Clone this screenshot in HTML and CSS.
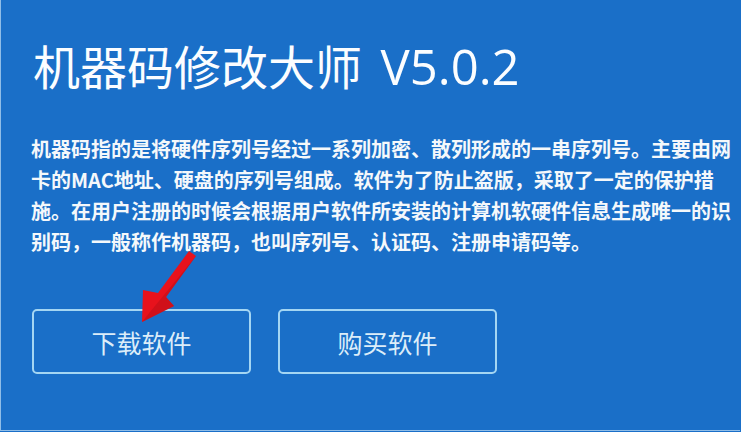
FILE: index.html
```html
<!DOCTYPE html>
<html lang="zh-CN">
<head>
  <meta charset="UTF-8">
  <meta name="viewport" content="width=device-width, initial-scale=1.0">
  <title>机器码修改大师</title>
  <link rel="stylesheet" href="styles.css">
</head>
<body>
  <div class="page">
    <h1 class="title">机器码修改大师 <span class="version">V5.0.2</span></h1>
    <p class="desc">
      机器码指的是将硬件序列号经过一系列加密、散列形成的一串序列号。主要由网<br>
      卡的MAC地址、硬盘的序列号组成。软件为了防止盗版，采取了一定的保护措<br>
      施。在用户注册的时候会根据用户软件所安装的计算机软硬件信息生成唯一的识<br>
      别码，一般称作机器码，也叫序列号、认证码、注册申请码等。
    </p>
    <div class="actions">
      <button class="button">下载软件</button>
      <button class="button">购买软件</button>
    </div>

    <!-- red arrow pointing at the download button -->
    <svg class="arrow" viewBox="0 0 741 432" width="741" height="432">
      <polygon points="189,251 196,256 166,297 174,306 142,322 143,290 158,293" fill="#e8121c"/>
      <polygon points="196,256 166,297 174,306 142,322 150,312" fill="#b80d16" opacity="0.5"/>
    </svg>
  </div>
</body>
</html>
```

FILE: styles.css
```css
body {
  margin: 0;
  background: #1a6fc8;
  font-family: "Noto Sans CJK SC", "Noto Sans", sans-serif;
}
.page {
  position: relative;
  width: 740px;
  height: 431px;
  padding: 41px 0 0 30px;
  box-sizing: border-box;
  border-left: 1px solid #8fbde8;
  border-bottom: 1px solid #8fbde8;
  overflow: hidden;
}
.title {
  margin: 0 0 0 2px;
  font-size: 47px;
  line-height: 48px;
  font-weight: 400;
  color: #fbfdff;
  white-space: nowrap;
}
.version {
  margin-left: 8px;
  font-family: "Open Sans", "Noto Sans", sans-serif;
  font-size: 49px;
}
.desc {
  margin: 43px 0 0;
  font-size: 20px;
  line-height: 31px;
  font-weight: 700;
  color: #f4f8fb;
  white-space: nowrap;
}
.actions {
  display: flex;
  gap: 27px;
  margin: 52px 0 0 1px;
}
.button {
  width: 219px;
  height: 65px;
  background: transparent;
  border: 2px solid #a4d6f3;
  border-radius: 5px;
  color: #dcedf9;
  font-family: inherit;
  font-size: 25px;
  padding: 0;
  cursor: pointer;
}
.arrow {
  position: absolute;
  left: -1px;
  top: 0;
  pointer-events: none;
}
```
